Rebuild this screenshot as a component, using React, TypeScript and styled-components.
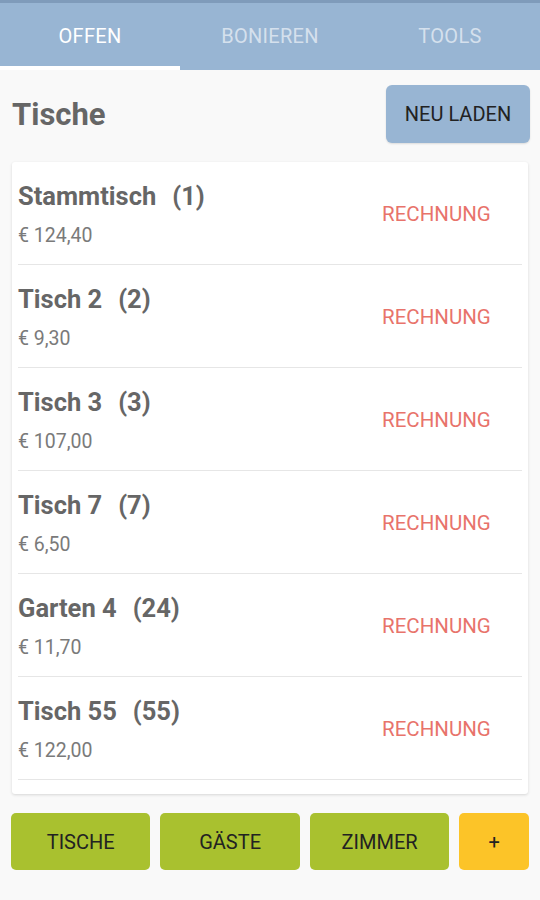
import React from "react";
import styled, { createGlobalStyle } from "styled-components";

const GlobalStyle = createGlobalStyle`
  html, body {
    margin: 0;
    padding: 0;
    background: #f9f9f9;
    font-family: Roboto, "Liberation Sans", sans-serif;
  }
  * {
    box-sizing: border-box;
  }
`;

const Page = styled.div`
  width: 540px;
  height: 900px;
  display: flex;
  flex-direction: column;
  background: #f9f9f9;
  overflow: hidden;
`;

const TabBar = styled.nav`
  height: 70px;
  display: flex;
  background: #98b5d3;
  border-top: 3px solid #7f9bba;
`;

const Tab = styled.div<{ $active?: boolean }>`
  flex: 1;
  display: flex;
  align-items: center;
  justify-content: center;
  padding-top: 3px;
  font-size: 20px;
  letter-spacing: 0.3px;
  color: ${(p) => (p.$active ? "#ffffff" : "rgba(255, 255, 255, 0.6)")};
  border-bottom: 4px solid ${(p) => (p.$active ? "#ffffff" : "transparent")};
`;

const Header = styled.div`
  display: flex;
  justify-content: space-between;
  align-items: center;
  padding: 0 10px 0 12px;
  height: 88px;
`;

const Title = styled.h1`
  margin: 0;
  font-size: 31px;
  font-weight: 700;
  color: #666666;
`;

const ReloadButton = styled.button`
  width: 144px;
  height: 58px;
  border: none;
  border-radius: 6px;
  background: #98b5d3;
  color: #222222;
  font-family: inherit;
  font-size: 20px;
  padding: 0;
  box-shadow: 0 1px 2px rgba(0, 0, 0, 0.12);
`;

const Card = styled.div`
  margin: 4px 12px 0 12px;
  height: 632px;
  background: #ffffff;
  border-radius: 3px;
  box-shadow: 0 1px 3px rgba(0, 0, 0, 0.14);
  padding: 0 6px 13px 6px;
  overflow: hidden;
`;

const Row = styled.div`
  height: 103px;
  display: flex;
  align-items: center;
  justify-content: space-between;
  border-bottom: 1px solid #e6e6e6;
  padding-top: 2px;
`;

const RowInfo = styled.div`
  display: flex;
  flex-direction: column;
  gap: 14px;
`;

const TableName = styled.div`
  font-size: 25.5px;
  font-weight: 700;
  color: #666666;
  line-height: 30px;
`;

const TableNumber = styled.span`
  margin-left: 16px;
`;

const Price = styled.div`
  font-size: 19.5px;
  color: #7a7a7a;
  line-height: 22px;
`;

const BillLink = styled.div`
  width: 140px;
  font-size: 20.5px;
  color: #e8736b;
`;

const Footer = styled.div`
  display: flex;
  gap: 10px;
  padding: 19px 11px 0 11px;
`;

const FooterButton = styled.button<{ $accent?: boolean; $grow: number }>`
  flex: ${(p) => p.$grow};
  height: 57px;
  border: none;
  border-radius: 5px;
  background: ${(p) => (p.$accent ? "#fcc428" : "#a9c12f")};
  color: #222222;
  font-family: inherit;
  font-size: 20px;
  padding: 0;
`;

const tables = [
  { name: "Stammtisch", nr: 1, price: "124,40" },
  { name: "Tisch 2", nr: 2, price: "9,30" },
  { name: "Tisch 3", nr: 3, price: "107,00" },
  { name: "Tisch 7", nr: 7, price: "6,50" },
  { name: "Garten 4", nr: 24, price: "11,70" },
  { name: "Tisch 55", nr: 55, price: "122,00" },
];

const App: React.FC = () => {
  return (
    <Page>
      <GlobalStyle />
      <TabBar>
        <Tab $active>OFFEN</Tab>
        <Tab>BONIEREN</Tab>
        <Tab>TOOLS</Tab>
      </TabBar>

      <Header>
        <Title>Tische</Title>
        <ReloadButton>NEU LADEN</ReloadButton>
      </Header>

      <Card>
        {tables.map((t) => (
          <Row key={t.nr}>
            <RowInfo>
              <TableName>
                {t.name}
                <TableNumber>({t.nr})</TableNumber>
              </TableName>
              <Price>€ {t.price}</Price>
            </RowInfo>
            <BillLink>RECHNUNG</BillLink>
          </Row>
        ))}
      </Card>

      <Footer>
        <FooterButton $grow={2}>TISCHE</FooterButton>
        <FooterButton $grow={2}>GÄSTE</FooterButton>
        <FooterButton $grow={2}>ZIMMER</FooterButton>
        <FooterButton $grow={1} $accent>
          +
        </FooterButton>
      </Footer>
    </Page>
  );
};

export default App;
